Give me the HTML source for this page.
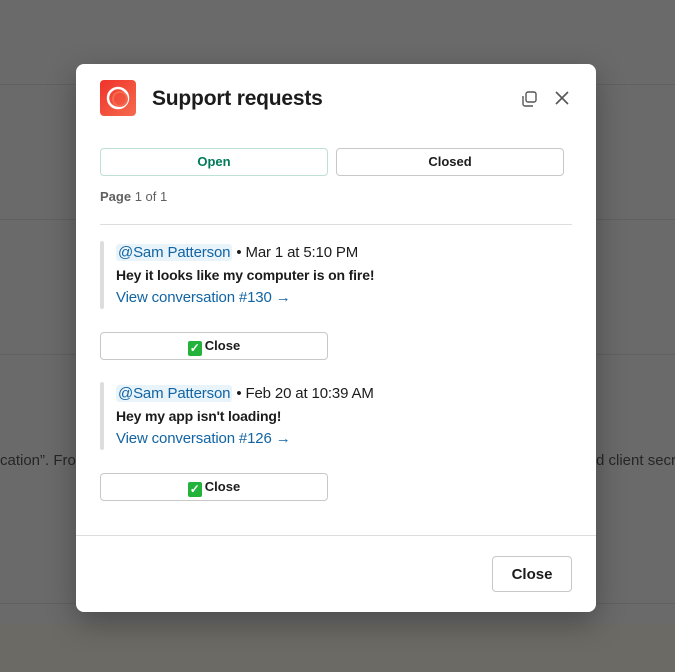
<!DOCTYPE html>
<html><head><style>
*{box-sizing:border-box;margin:0;padding:0}
body{width:675px;height:672px;overflow:hidden;background:#6a6a6a;font-family:"Liberation Sans",sans-serif;position:relative}
.ln{position:absolute;left:0;width:675px;height:1px;background:#616161}
.bot{position:absolute;left:0;top:624px;width:675px;height:48px;background:#6b6a64}
.bgt{position:absolute;top:452px;font-size:15px;color:#262626;white-space:nowrap}
.modal{position:absolute;left:76px;top:64px;width:520px;height:548px;background:#fff;border-radius:8px;box-shadow:0 10px 30px rgba(0,0,0,.3)}
.logo{position:absolute;left:24px;top:16px;width:36px;height:36px;border-radius:4px;background:linear-gradient(135deg,#f0322a,#f56b4e)}
.title{position:absolute;left:76px;top:23px;font-size:21px;font-weight:bold;color:#1d1c1d;letter-spacing:-0.2px}
.btn{position:absolute;height:28px;border:1px solid #c8c8c8;border-radius:4px;font-size:13px;font-weight:bold;text-align:center;line-height:26px;color:#1d1c1d;background:#fff}
.pg{position:absolute;left:24px;top:125px;font-size:13px;color:#616061}
.hr{position:absolute;left:24px;width:472px;height:1px;background:#ddd}
.q{position:absolute;left:24px;width:4px;background:#ddd;border-radius:2px}
.t{position:absolute;left:40px;font-size:15px;color:#1d1c1d;white-space:nowrap;letter-spacing:-0.15px}
.m{background:#e8f4fa;color:#1264a3;padding:0 2px;border-radius:3px}
.a{color:#1264a3}
.ck{display:inline-block;width:14px;height:15px;background:#23b33b;border-radius:2px;color:#fff;font-size:12px;line-height:15px;vertical-align:-2px;margin-right:3px}
</style></head><body>
<div class="ln" style="top:84px"></div><div class="ln" style="top:219px"></div><div class="ln" style="top:354px"></div><div class="ln" style="top:603px"></div>
<div class="bot"></div>
<div class="bgt" style="left:0">cation”. Fro</div>
<div class="bgt" style="left:596px">d client secre</div>
<div class="modal">
<div class="logo"><svg width="36" height="36" viewBox="0 0 36 36"><circle cx="18" cy="18" r="10" fill="none" stroke="#fff" stroke-width="2.5"/><circle cx="20" cy="19" r="7" fill="none" stroke="#f56b4e" stroke-width="2"/></svg></div>
<div class="title">Support requests</div>
<svg style="position:absolute;left:444px;top:26px" width="18" height="18" viewBox="0 0 18 18" fill="none" stroke="#555" stroke-width="1.4"><rect x="6" y="2" width="10" height="10" rx="2"/><path d="M3 6v8a2 2 0 0 0 2 2h8"/></svg>
<svg style="position:absolute;left:478px;top:26px" width="16" height="16" viewBox="0 0 16 16" stroke="#555" stroke-width="1.6"><path d="M2 2l12 12M14 2L2 14"/></svg>
<div class="btn" style="left:24px;top:84px;width:228px;color:#007a5a;border-color:#bfe0d6">Open</div>
<div class="btn" style="left:260px;top:84px;width:228px">Closed</div>
<div class="pg"><b>Page</b> 1 of 1</div>
<div class="hr" style="top:160px"></div>
<div class="q" style="top:177px;height:68px"></div>
<div class="t" style="top:180px"><span class="m">@Sam Patterson</span> • Mar 1 at 5:10 PM</div>
<div class="t" style="top:203px;font-size:14px;font-weight:bold">Hey it looks like my computer is on fire!</div>
<div class="t a" style="top:225px">View conversation #130 →</div>
<div class="btn" style="left:24px;top:268px;width:228px"><span class="ck">✓</span>Close</div>
<div class="q" style="top:318px;height:68px"></div>
<div class="t" style="top:321px"><span class="m">@Sam Patterson</span> • Feb 20 at 10:39 AM</div>
<div class="t" style="top:344px;font-size:14px;font-weight:bold">Hey my app isn't loading!</div>
<div class="t a" style="top:366px">View conversation #126 →</div>
<div class="btn" style="left:24px;top:409px;width:228px"><span class="ck">✓</span>Close</div>
<div style="position:absolute;left:0;top:471px;width:520px;height:1px;background:#ddd"></div>
<div class="btn" style="left:416px;top:492px;width:80px;height:36px;line-height:36px;font-size:15px">Close</div>
</div>
</body></html>
